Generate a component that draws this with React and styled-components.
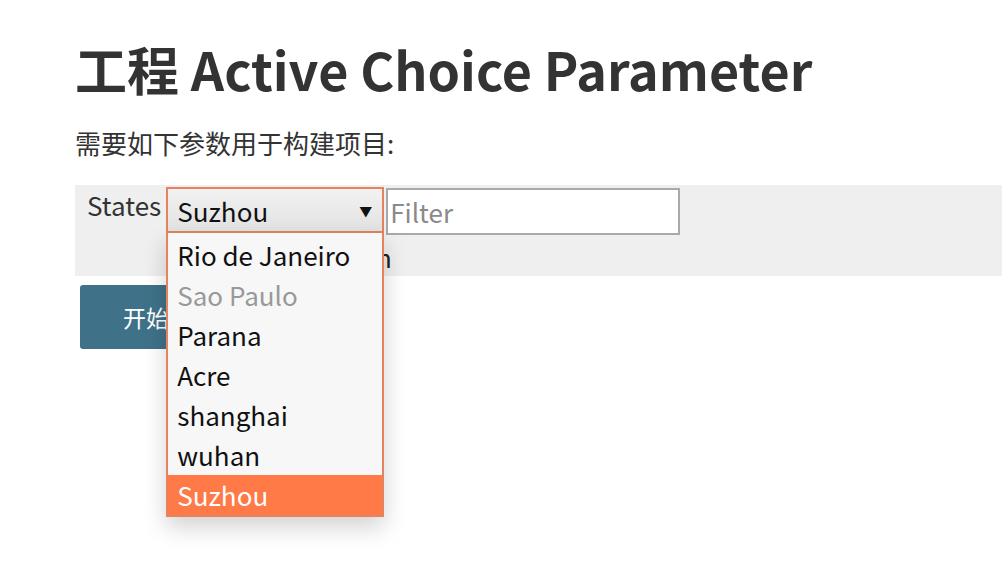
import React from 'react';
import styled, { createGlobalStyle } from 'styled-components';

const GlobalStyle = createGlobalStyle`
  html, body {
    margin: 0;
    padding: 0;
    background: #fff;
    font-family: "Noto Sans CJK SC", "Noto Sans", sans-serif;
    color: #333;
  }
`;

const Page = styled.div`
  min-height: 574px;
  padding: 36px 0 0 75px;
  box-sizing: border-box;
`;

const Title = styled.h1`
  margin: 0;
  font-size: 52px;
  font-weight: 700;
  line-height: 66px;
  color: #333;
`;

const Intro = styled.p`
  margin: 24px 0 25px;
  font-size: 26px;
  line-height: 34px;
  color: #333;
`;

const ParamPanel = styled.div`
  background: #efefef;
  height: 91px;
  box-sizing: border-box;
  padding: 2px 0 0 12px;
  display: flex;
  align-items: flex-start;
  gap: 5px;
`;

const Label = styled.span`
  font-size: 26px;
  line-height: 36px;
  color: #333;
`;

const Field = styled.div`
  position: relative;
  display: flex;
  flex-direction: column;
`;

const Controls = styled.div`
  display: flex;
  gap: 2px;
`;

const Select = styled.div`
  width: 218px;
  height: 46px;
  box-sizing: border-box;
  border: 2px solid #e3835f;
  background: linear-gradient(#f2f2f2, #e2e2e2);
  display: flex;
  align-items: center;
  justify-content: space-between;
  padding: 0 10px 0 9px;
  font-size: 26px;
  color: #111;
`;

const Arrow = styled.span`
  font-size: 13px;
  color: #111;
`;

const FilterInput = styled.input`
  width: 294px;
  height: 47px;
  margin-top: 1px;
  box-sizing: border-box;
  border: 2px solid #a9a9a9;
  background: #fff;
  font-family: "Noto Sans CJK SC", sans-serif;
  font-size: 26px;
  padding: 0 2px;
  outline: none;
  &::placeholder {
    color: #8a8a8a;
  }
`;

const Hint = styled.div`
  font-size: 26px;
  line-height: 44px;
  padding-left: 10px;
  color: #222;
`;

const Dropdown = styled.ul`
  position: absolute;
  top: 46px;
  left: 0;
  width: 218px;
  box-sizing: border-box;
  margin: 0;
  padding: 2px 0 0;
  list-style: none;
  background: #f7f7f7;
  border: 2px solid #e3835f;
  border-top: none;
  box-shadow: 0 10px 22px rgba(0, 0, 0, 0.18);
`;

const Option = styled.li`
  height: 40px;
  line-height: 40px;
  padding: 0 9px;
  font-size: 26px;
  color: ${p => (p.$selected ? '#fff' : p.$disabled ? '#999' : '#111')};
  background: ${p => (p.$selected ? '#ff7a46' : 'transparent')};
`;

const BuildButton = styled.button`
  margin: 9px 0 0 5px;
  width: 170px;
  height: 64px;
  border: none;
  border-radius: 3px;
  background: #3f7289;
  color: #fff;
  font-family: "Noto Sans CJK SC", sans-serif;
  font-size: 23px;
  text-align: left;
  padding-left: 43px;
`;

const states = [
  { name: 'Rio de Janeiro' },
  { name: 'Sao Paulo', disabled: true },
  { name: 'Parana' },
  { name: 'Acre' },
  { name: 'shanghai' },
  { name: 'wuhan' },
  { name: 'Suzhou', selected: true },
];

export default function App() {
  return (
    <>
      <GlobalStyle />
      <Page>
        <Title>工程 Active Choice Parameter</Title>
        <Intro>需要如下参数用于构建项目:</Intro>
        <ParamPanel>
          <Label>States</Label>
          <Field>
            <Controls>
              <Select>
                <span>Suzhou</span>
                <Arrow>▼</Arrow>
              </Select>
              <FilterInput placeholder="Filter" />
            </Controls>
            <Hint>Choose a location</Hint>
            <Dropdown>
              {states.map(s => (
                <Option key={s.name} $selected={s.selected} $disabled={s.disabled}>
                  {s.name}
                </Option>
              ))}
            </Dropdown>
          </Field>
        </ParamPanel>
        <BuildButton>开始构建</BuildButton>
      </Page>
    </>
  );
}
